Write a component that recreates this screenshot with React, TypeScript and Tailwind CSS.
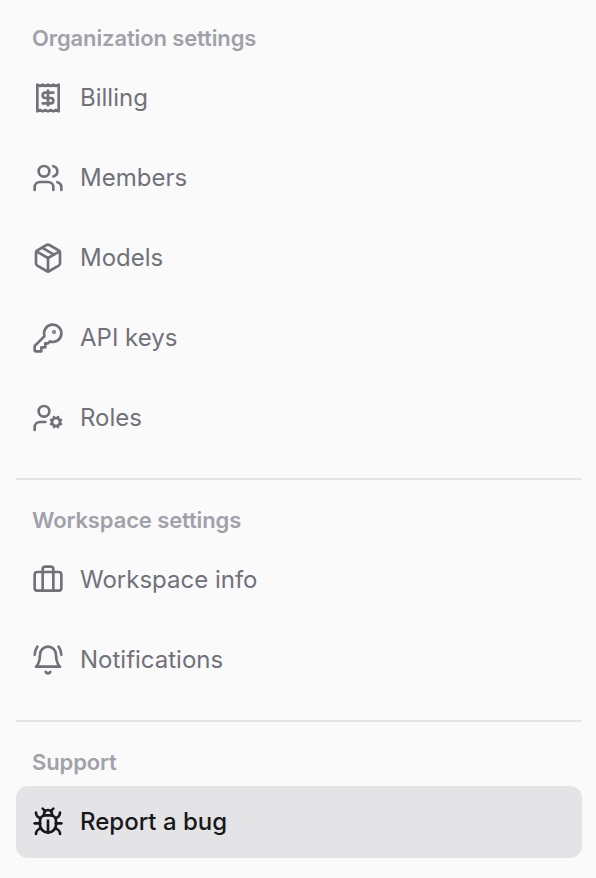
import React from "react";
import { Users, UserCog, Briefcase, Package } from "lucide-react";

type IconComponent = React.ComponentType<{ className?: string }>;

function Glyph({ className, children }: { className?: string; children: React.ReactNode }) {
  return (
    <svg className={className} viewBox="0 0 24 24" fill="none" stroke="currentColor" strokeWidth="2" strokeLinecap="round" strokeLinejoin="round">
      {children}
    </svg>
  );
}

function BillingIcon({ className }: { className?: string }) {
  return (
    <Glyph className={className}>
      <path d="M4 2v20l2-1 2 1 2-1 2 1 2-1 2 1 2-1 2 1V2l-2 1-2-1-2 1-2-1-2 1-2-1-2 1Z" />
      <path d="M16 8h-6a2 2 0 1 0 0 4h4a2 2 0 1 1 0 4H8" />
      <path d="M12 17.5v-11" />
    </Glyph>
  );
}

function KeyIcon({ className }: { className?: string }) {
  return (
    <Glyph className={className}>
      <path d="M2 18v3c0 .6.4 1 1 1h4v-3h3v-3h2l1.4-1.4a6.5 6.5 0 1 0-4-4Z" />
      <circle cx="16.5" cy="7.5" r=".5" fill="currentColor" />
    </Glyph>
  );
}

function BellIcon({ className }: { className?: string }) {
  return (
    <Glyph className={className}>
      <path d="M6 8a6 6 0 0 1 12 0c0 7 3 9 3 9H3s3-2 3-9" />
      <path d="M10.3 21a1.94 1.94 0 0 0 3.4 0" />
      <path d="M4 2C2.8 3.7 2 5.7 2 8" />
      <path d="M22 8c0-2.3-.8-4.3-2-6" />
    </Glyph>
  );
}

function BugIcon({ className }: { className?: string }) {
  return (
    <Glyph className={className}>
      <path d="m8 2 1.88 1.88" />
      <path d="M14.12 3.88 16 2" />
      <path d="M9 7.13v-1a3.003 3.003 0 1 1 6 0v1" />
      <path d="M12 20c-3.3 0-6-2.7-6-6v-3a4 4 0 0 1 4-4h4a4 4 0 0 1 4 4v3c0 3.3-2.7 6-6 6" />
      <path d="M12 20v-9" />
      <path d="M6.53 9C4.6 8.8 3 7.1 3 5" />
      <path d="M6 13H2" />
      <path d="M3 21c0-2.1 1.7-3.9 3.8-4" />
      <path d="M20.97 5c0 2.1-1.6 3.8-3.5 4" />
      <path d="M22 13h-4" />
      <path d="M17.2 17c2.1.1 3.8 1.9 3.8 4" />
    </Glyph>
  );
}

function Item({ icon: Icon, label, active = false }: { icon: IconComponent; label: string; active?: boolean }) {
  return (
    <a className={`flex h-[72px] items-center gap-4 rounded-xl px-4 text-2xl ${active ? "bg-[#e4e4e6] font-medium text-[#18181b]" : "text-[#71717a]"}`}>
      <Icon className="size-8 shrink-0" />
      <span>{label}</span>
    </a>
  );
}

function Heading({ children }: { children: string }) {
  return <h2 className="px-4 pb-2 text-[22px] leading-8 font-semibold tracking-[-0.12px] text-[#a1a1aa]">{children}</h2>;
}

export default function App() {
  return (
    <nav className="h-[878px] bg-[#fafafa] pr-3.5 pl-4 pt-[22px] font-['Inter',sans-serif]">
      <section>
        <Heading>Organization settings</Heading>
        <div className="flex flex-col gap-2">
          <Item icon={BillingIcon} label="Billing" />
          <Item icon={Users} label="Members" />
          <Item icon={Package} label="Models" />
          <Item icon={KeyIcon} label="API keys" />
          <Item icon={UserCog} label="Roles" />
        </div>
      </section>
      <section className="mt-6 border-t-2 border-[#e4e4e6] pt-6">
        <Heading>Workspace settings</Heading>
        <div className="flex flex-col gap-2">
          <Item icon={Briefcase} label="Workspace info" />
          <Item icon={BellIcon} label="Notifications" />
        </div>
      </section>
      <section className="mt-6 border-t-2 border-[#e4e4e6] pt-6">
        <Heading>Support</Heading>
        <Item icon={BugIcon} label="Report a bug" active />
      </section>
    </nav>
  );
}
